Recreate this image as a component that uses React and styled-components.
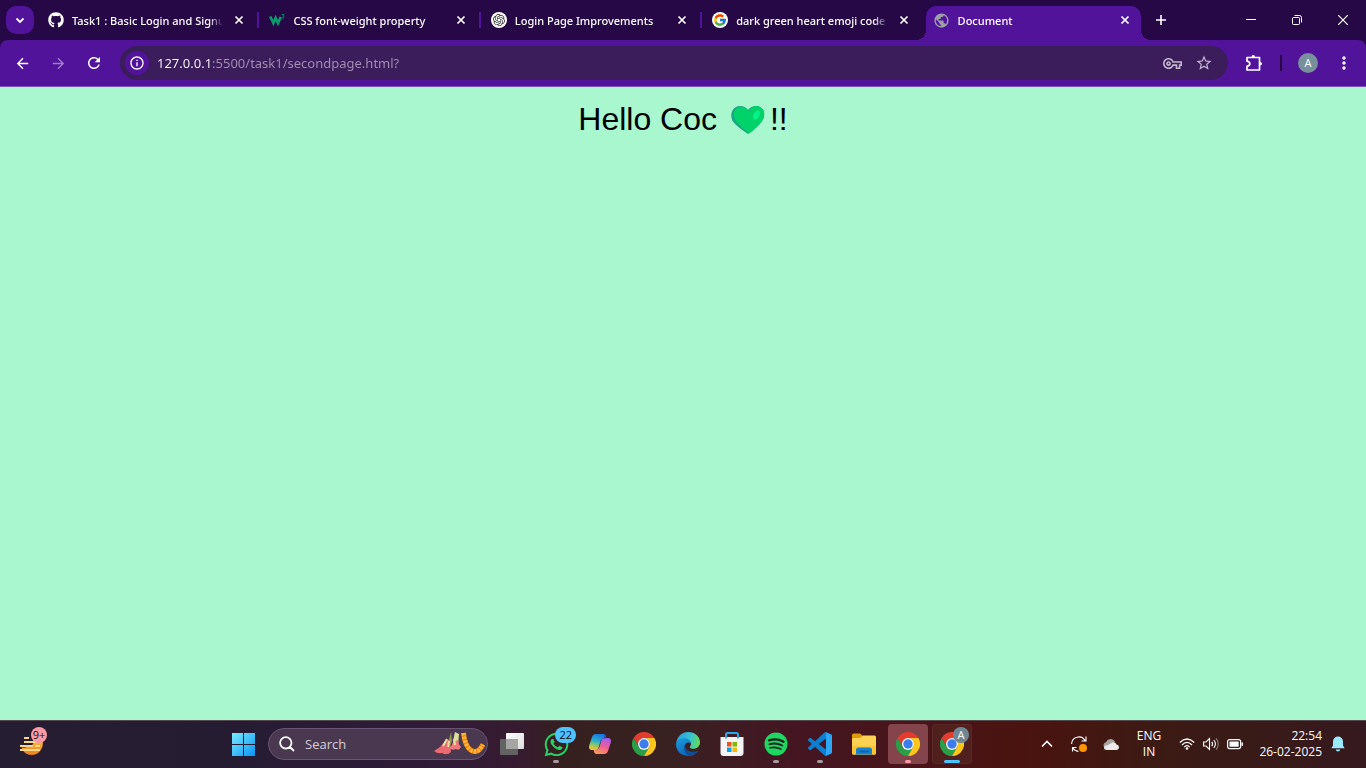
import React from "react";
import styled, { createGlobalStyle, css } from "styled-components";
import { FaGithub, FaWhatsapp } from "react-icons/fa";
import { FcGoogle } from "react-icons/fc";
import { SiOpenai } from "react-icons/si";
import {
  MdArrowBack,
  MdArrowForward,
  MdRefresh,
  MdInfoOutline,
  MdOutlineVpnKey,
  MdStarBorder,
  MdPublic,
  MdMoreVert,
  MdClose,
  MdAdd,
} from "react-icons/md";

const ui = `"Segoe UI", "Open Sans", "Noto Sans", sans-serif`;
const uiSmall = `"Segoe UI", "Noto Sans", "Open Sans", sans-serif`;

const Global = createGlobalStyle`
  *, *::before, *::after { box-sizing: border-box; }
  body { margin: 0; background: #a9f7cf; font-family: ${ui}; }
  button, input { font: inherit; color: inherit; border: 0; background: none; padding: 0; margin: 0; }
  button { display: flex; align-items: center; justify-content: center; cursor: pointer; }
  svg { display: block; flex: none; }
`;

const Screen = styled.div`
  display: flex;
  flex-direction: column;
  min-height: 100vh;
`;

/* ---------- browser ---------- */

const TabStrip = styled.header`
  display: flex;
  align-items: center;
  height: 40px;
  background: #260847;
  color: #fff;
`;

const TabSearch = styled.button`
  width: 28px;
  height: 28px;
  margin: 0 6px;
  border-radius: 10px;
  background: #52139b;
`;

const Tabs = styled.nav`
  display: grid;
  grid-auto-flow: column;
  grid-auto-columns: minmax(0, 1fr);
  align-self: flex-end;
  flex: 1;
  min-width: 0;
`;

const TabBox = styled.div`
  position: relative;
  display: flex;
  align-items: center;
  min-width: 0;
  height: 34px;
  padding: 0 2px 6px 8px;
  gap: 8px;
  ${(p) =>
    p.$active &&
    css`
      margin-right: 6px;
      padding-right: 8px;
      border-radius: 10px 10px 0 0;
      background: #52139b;
      &::before,
      &::after {
        content: "";
        position: absolute;
        bottom: 0;
        width: 10px;
        height: 10px;
      }
      &::before {
        right: 100%;
        background: radial-gradient(circle at 0 0, transparent 10px, #52139b 10px);
      }
      &::after {
        left: 100%;
        background: radial-gradient(circle at 100% 0, transparent 10px, #52139b 10px);
      }
    `}
`;

const TabLabel = styled.span`
  flex: 1;
  min-width: 0;
  padding-top: 1px;
  overflow: hidden;
  white-space: nowrap;
  font-family: ${uiSmall};
  font-size: 11px;
  font-weight: 500;
  line-height: 18px;
  mask-image: linear-gradient(to right, #000 calc(100% - 14px), transparent);
`;

const CloseTab = styled.button`
  width: 16px;
  height: 16px;
`;

const TabRule = styled.span`
  width: 2px;
  height: 16px;
  margin: 0 0 0 2px;
  background: ${(p) => (p.$hidden ? "transparent" : "#52139b")};
`;

const Favicon = styled.span`
  display: flex;
  align-items: center;
  justify-content: center;
  width: 16px;
  height: 16px;
  flex: none;
  border-radius: 50%;
  color: ${(p) => p.$color || "#fff"};
  background: ${(p) => p.$bg || "transparent"};
`;

const NewTab = styled.button`
  width: 28px;
  height: 28px;
  margin-right: 53px;
`;

const WindowButton = styled.button`
  width: 46px;
  height: 40px;
`;

const ToolbarBack = styled.div`
  background: #260847;
`;

const Toolbar = styled.div`
  display: flex;
  align-items: center;
  height: 47px;
  padding: 0 8px;
  border-radius: 8px 8px 0 0;
  border-bottom: 1px solid #7b4fb3;
  background: #52139b;
  color: #fff;
`;

const ToolButton = styled.button`
  width: 28px;
  height: 34px;
  margin-right: ${(p) => p.$gap || "8px"};
  opacity: ${(p) => (p.$dim ? 0.45 : 1)};
`;

const Omnibox = styled.div`
  display: flex;
  align-items: center;
  flex: 1;
  min-width: 0;
  height: 34px;
  margin: 0 12px 0 4px;
  padding: 0 12px 0 5px;
  border-radius: 17px;
  background: #3b1d5c;
  color: #c3b8ca;
`;

const SiteInfo = styled.button`
  width: 24px;
  height: 24px;
  border-radius: 50%;
  background: #52139b;
  color: #fff;
`;

const Address = styled.input`
  flex: 1;
  min-width: 0;
  height: 24px;
  margin-left: 8px;
  font-family: ${uiSmall};
  font-size: 13px;
  outline: none;
  background: linear-gradient(to right, #fff 54px, #a491b2 54px);
  background-clip: text;
  -webkit-background-clip: text;
  -webkit-text-fill-color: transparent;
`;

const OmniButton = styled.button`
  width: 24px;
  height: 24px;
  margin-left: 8px;
`;

const ToolRule = styled.span`
  width: 2px;
  height: 16px;
  margin-right: 12px;
  background: #260847;
`;

const Avatar = styled.span`
  display: flex;
  align-items: center;
  justify-content: center;
  width: 20px;
  height: 20px;
  border-radius: 50%;
  background: #78909c;
  font-size: 11px;
  line-height: 20px;
  color: #fff;
`;

/* ---------- page ---------- */

const Page = styled.main`
  flex: 1;
  padding: 14px 8px;
  background: #a9f7cf;
`;

const Greeting = styled.p`
  display: flex;
  justify-content: center;
  margin: 0;
  font-family: Arial, "Liberation Sans", sans-serif;
  font-size: 32px;
  line-height: 37px;
  color: #000;
  white-space: pre;
`;

/* ---------- taskbar ---------- */

const Taskbar = styled.footer`
  display: flex;
  align-items: center;
  height: 48px;
  box-shadow: inset 0 1px 0 #57474f;
  background: linear-gradient(
    to right,
    #251d31 0%,
    #251c33 18%,
    #301b38 32%,
    #371b30 38%,
    #35201f 41%,
    #3a2022 50%,
    #441622 58%,
    #481519 67%,
    #4a130f 75%,
    #3d1a14 84%,
    #381a18 92%,
    #36191f 100%
  );
  color: #fff;
`;

const WidgetArea = styled.div`
  display: flex;
  width: 221px;
  padding-left: 12px;
`;

const WidgetButton = styled.button`
  position: relative;
  width: 40px;
  height: 40px;
`;

const AppButton = styled.button`
  position: relative;
  width: 40px;
  height: 40px;
  margin: 0 2px;
  border-radius: 4px;
  background: ${(p) => p.$bg || "transparent"};
  box-shadow: ${(p) => (p.$outline ? "inset 0 0 0 1px #5a2826" : "none")};
  &::after {
    content: "";
    position: absolute;
    bottom: 1px;
    left: 50%;
    transform: translateX(-50%);
    width: ${(p) => (p.$wide ? "16px" : "6px")};
    height: 3px;
    border-radius: 2px;
    background: ${(p) => p.$mark || "transparent"};
  }
`;

const Badge = styled.span`
  position: absolute;
  top: 3px;
  right: ${(p) => p.$right || "0"};
  min-width: 16px;
  height: 16px;
  padding: 0 ${(p) => p.$pad || "0"};
  border-radius: 8px;
  background: ${(p) => p.$bg};
  color: ${(p) => p.$color || "#111"};
  font-size: 11px;
  line-height: 16px;
  text-align: center;
`;

const SearchBox = styled.label`
  display: flex;
  align-items: center;
  width: 220px;
  height: 32px;
  margin: 0 2px 0 3px;
  padding: 0 1px 0 10px;
  border: 1px solid #665472;
  border-radius: 16px;
  background: #49384f;
`;

const SearchInput = styled.input`
  flex: 1;
  min-width: 0;
  margin-left: 10px;
  font-size: 13px;
  outline: none;
  &::placeholder {
    color: #d6cfd9;
    opacity: 1;
  }
`;

const Tray = styled.div`
  display: flex;
  align-items: center;
  margin-left: auto;
  padding-right: 12px;
  font-size: 12px;
  line-height: 16px;
`;

const TrayButton = styled.button`
  width: ${(p) => p.$w || "32px"};
  height: 40px;
`;

const Language = styled.button`
  flex-direction: column;
  width: 44px;
  height: 40px;
`;

const Clock = styled.button`
  flex-direction: column;
  align-items: flex-end;
  width: 71px;
  height: 40px;
`;

/* ---------- drawings ---------- */

const Chrome = ({ size = 24 }) => (
  <svg width={size} height={size} viewBox="0 0 24 24">
    <path d="M1.6 6A12 12 0 0 1 22.4 6H12A6 6 0 0 0 6.8 15Z" fill="#e33b2e" />
    <path d="M1.6 6A12 12 0 0 0 12 24L17.2 15A6 6 0 0 1 6.8 15Z" fill="#2a9f48" />
    <path d="M22.4 6A12 12 0 0 1 12 24L17.2 15A6 6 0 0 0 12 6Z" fill="#fcc61b" />
    <circle cx="12" cy="12" r="6" fill="#fff" />
    <circle cx="12" cy="12" r="4.7" fill="#3b7ded" />
  </svg>
);

const Edge = () => (
  <svg width="24" height="24" viewBox="0 0 24 24">
    <defs>
      <linearGradient id="edgeTop" x1="0" y1="0.3" x2="1" y2="0.5">
        <stop offset="0" stopColor="#2a9fe0" />
        <stop offset="0.55" stopColor="#35c1d4" />
        <stop offset="1" stopColor="#63d957" />
      </linearGradient>
      <linearGradient id="edgeLow" x1="0" y1="0" x2="0.6" y2="1">
        <stop offset="0" stopColor="#1b9de0" />
        <stop offset="1" stopColor="#0b60b4" />
      </linearGradient>
    </defs>
    <path d="M0.3 11C1 4.5 6 0 12.2 0C19 0 24 4.6 24 10.2C24 14.2 21 16.7 17.5 16.7C15 16.7 13.7 15.8 13.8 14.9C14 14.2 15 13.8 15 12C15 9.5 12.5 7 8.6 7C4.600 7 1.300 9 .3 11Z" fill="url(#edgeTop)" />
    <path d="M0 12C.2 8.500 4 6.300 8.200 6.300C12.500 6.300 15 9 15 11.500C13.500 9.900 10 10.300 9 13C7.700 17 11 20.700 15.500 20.700C18.500 20.700 21 19.300 22 18.500C20.200 22 16.500 24 12.300 24C5 24 0 19 0 12Z" fill="url(#edgeLow)" />
    <path d="M9.200 12.500C6.500 16 8.500 22 14 23.800C17.500 23.500 20.700 21.500 22.300 18.200C17 21.500 8.800 19.500 9.200 12.500Z" fill="#124c94" />
  </svg>
);

const Copilot = () => (
  <svg width="24" height="24" viewBox="0 0 24 24">
    <defs>
      <linearGradient id="copA" x1="0.6" y1="0" x2="0.3" y2="1">
        <stop offset="0" stopColor="#1876e5" />
        <stop offset="0.45" stopColor="#27b0cf" />
        <stop offset="0.75" stopColor="#9bc75a" />
        <stop offset="1" stopColor="#f5c433" />
      </linearGradient>
      <linearGradient id="copB" x1="0.7" y1="0" x2="0.3" y2="1">
        <stop offset="0" stopColor="#a85af0" />
        <stop offset="0.5" stopColor="#ee5d96" />
        <stop offset="1" stopColor="#ff9b54" />
      </linearGradient>
    </defs>
    <path d="M8 2H15.500C17 2 17.700 3.200 18 4.500L18.500 6.500H16C14 6.500 13.200 7.500 12.700 9L10.500 16C10 17.500 9 18 7.500 18H4C1.500 18 .5 16 1.200 13.500L4 5C4.700 3 6 2 8 2Z" fill="url(#copA)" />
    <path d="M16 22H8.500C7 22 6.300 20.800 6 19.500L5.500 17.700H8C10 17.700 10.800 16.500 11.300 15L13.500 8C14 6.500 15 6 16.500 6H20C22.500 6 23.500 8 22.800 10.500L20 19C19.300 21 18 22 16 22Z" fill="url(#copB)" />
    <path d="M11.300 15L13.500 8C13.900 6.800 14.700 6.200 15.700 6L16.500 2.300C18 3 18.200 5 18.500 6.500H16C14 6.500 13.200 7.500 12.700 9L10.500 16Z" fill="#2450b8" />
  </svg>
);

const Store = () => (
  <svg width="24" height="24" viewBox="0 0 24 24">
    <path d="M6 6V2.500Q6 1 7.500 1H16.500Q18 1 18 2.500V6" fill="none" stroke="#29a8ea" strokeWidth="2" />
    <path d="M.5 5H23.500V21Q23.500 24 20.500 24H3.500Q.5 24 .5 21Z" fill="#f4f4f4" />
    <path d="M6 5V6.500M18 5V6.500" stroke="#1b7fc0" strokeWidth="1.500" />
    <path d="M7 10H11.500V14.500H7Z" fill="#f1511b" />
    <path d="M12.500 10H17V14.500H12.500Z" fill="#7fba00" />
    <path d="M7 15.500H11.500V20H7Z" fill="#00a4ef" />
    <path d="M12.500 15.500H17V20H12.500Z" fill="#fbb80a" />
  </svg>
);

const Spotify = () => (
  <svg width="24" height="24" viewBox="0 0 24 24">
    <circle cx="12" cy="12" r="11.500" fill="#1ed760" />
    <g fill="none" stroke="#1c2320" strokeLinecap="round">
      <path d="M5 8.300C10 6.900 15.500 7.400 19.500 9.700" strokeWidth="2.300" />
      <path d="M5.500 12.200C10 11 14.500 11.500 18.200 13.500" strokeWidth="1.900" />
      <path d="M6 15.800C10 14.900 13.700 15.300 17 17.100" strokeWidth="1.600" />
    </g>
  </svg>
);

const Code = () => (
  <svg width="24" height="24" viewBox="0 0 24 24">
    <path d="M23.150 2.587L18.210.210a1.494 1.494 0 0 0-1.705.290l-9.460 8.630-4.120-3.128a.999.999 0 0 0-1.276.057L.327 7.261A1 1 0 0 0 .326 8.740L3.899 12 .326 15.260a1 1 0 0 0 .001 1.479L1.650 17.940a.999.999 0 0 0 1.276.057l4.120-3.128 9.460 8.630a1.492 1.492 0 0 0 1.704.290l4.942-2.377A1.500 1.500 0 0 0 24 20.060V3.939a1.500 1.500 0 0 0-.850-1.352zm-5.146 14.861L10.826 12l7.178-5.448v10.896z" fill="#0c7fd0" />
    <path d="M18 .15L23.150 2.590A1.500 1.500 0 0 1 24 3.940V20.060A1.500 1.500 0 0 1 23.150 21.400L18 23.850Z" fill="#2da6f5" />
  </svg>
);

const Folder = () => (
  <svg width="24" height="24" viewBox="0 0 24 24">
    <path d="M0 3Q0 1.500 1.500 1.500H8L11 4H22V9H0Z" fill="#e09b0b" />
    <path d="M0 7Q0 6 1 6H8L11 3.500H22.500Q24 3.500 24 5V21Q24 22.500 22.500 22.500H1.500Q0 22.500 0 21Z" fill="#fdd253" />
    <path d="M0 14H24V21Q24 22.500 22.500 22.500H1.500Q0 22.500 0 21Z" fill="#fbc634" />
    <path d="M4 22.500V18Q4 15.500 6.500 15.500H17.500Q20 15.500 20 18V22.500Z" fill="#1580d0" />
    <path d="M8 19.500H16" stroke="#0b5ea5" strokeWidth="1.600" strokeLinecap="round" />
  </svg>
);

const TaskView = () => (
  <svg width="24" height="24" viewBox="0 0 24 24">
    <defs>
      <linearGradient id="tv" x1="0" y1="0" x2="1" y2="1">
        <stop offset="0" stopColor="#fff" />
        <stop offset="1" stopColor="#dcdcdc" />
      </linearGradient>
    </defs>
    <rect x="0" y="7" width="18" height="16" rx="1" fill="#626262" />
    <rect x="6" y="1" width="18" height="16" rx="1" fill="url(#tv)" />
    <rect x="6" y="7" width="12" height="10" fill="#a5a5a5" />
  </svg>
);

const Windows = () => (
  <svg width="24" height="24" viewBox="0 0 24 24">
    <defs>
      <linearGradient id="win" gradientUnits="userSpaceOnUse" x1="0" y1="0" x2="24" y2="24">
        <stop offset="0" stopColor="#7df0ff" />
        <stop offset="1" stopColor="#0a93f5" />
      </linearGradient>
    </defs>
    <path d="M1 1H12V12H1ZM13 1H24V12H13ZM1 13H12V24H1ZM13 13H24V24H13Z" fill="url(#win)" />
  </svg>
);

const Weather = () => (
  <svg width="24" height="24" viewBox="0 0 24 24">
    <defs>
      <linearGradient id="sun" x1="0" y1="0" x2="0" y2="1">
        <stop offset="0" stopColor="#f9bb3c" />
        <stop offset="1" stopColor="#ea7d1c" />
      </linearGradient>
    </defs>
    <path d="M15 8H22.500Q23.800 14 20.500 18.500Q17 23 12 23Q5.500 23 2.500 18L1.500 15.500H5L12 13.500Z" fill="url(#sun)" />
    <path d="M4 6H9M4 10H17M0 14H13M15 14H20M0 18H20" stroke="#f6d789" strokeWidth="2" />
  </svg>
);

const Flowers = () => (
  <svg width="52" height="26" viewBox="0 0 52 26">
    <path d="M17 1Q16 7 13 12L10 17L15 18L18 10Z" fill="#8f9a4c" />
    <path d="M21 1Q19 8 19 14L24 15L25 3Z" fill="#dbe09a" />
    <path d="M12 8Q9 15 0 20Q3 23 8 22Q13 25 17 21L16 10Z" fill="#ea6a70" />
    <path d="M19 11Q18 15 15 17Q18 20 22 18Q25 20 27 16Q24 13 24 9Z" fill="#f0777c" />
    <path d="M13 8L9 15M20 8L21 14M15 10L14 16" stroke="#e6e0a4" strokeWidth="2" />
    <path d="M29.500 2C30 9 33 19 40 20.500C45 21 47 17 49 13.500" fill="none" stroke="#e8820c" strokeWidth="5" />
    <path d="M29.500 2C30 9 33 19 40 20.500C45 21 47 17 49 13.500" fill="none" stroke="#ffb53c" strokeWidth="4" strokeDasharray="2.500 1.200" />
  </svg>
);

const W3 = () => (
  <svg width="16" height="16" viewBox="0 0 16 16">
    <path d="M1.200 4.500L4.400 11L6.600 6L9 11L11.800 5" fill="none" stroke="#0a9b6b" strokeWidth="2.700" />
    <path d="M12.700 2.500H15L13.800 4.100Q15.300 4.300 15 5.500Q14.500 6.700 12.800 6" fill="none" stroke="#0a8a62" strokeWidth="1" />
  </svg>
);

const Puzzle = () => (
  <svg width="18" height="18" viewBox="0 0 18 18" fill="none" stroke="currentColor" strokeWidth="1.700" strokeLinejoin="round">
    <path d="M2 3.500H14.500V16H2V12.300Q4.800 11.800 4.800 9.750Q4.800 7.700 2 7.200Z" />
    <path d="M6.500 3Q6.500 1 8.250 1Q10 1 10 3ZM15 8Q17 8 17 9.750Q17 11.500 15 11.500Z" fill="currentColor" stroke="none" />
  </svg>
);

const Heart = () => (
  <svg width="44" height="37" viewBox="-1 0 44 37" role="img" aria-label="green heart">
    <path d="M21 33Q9 25 5.500 20Q3 14 5.500 9.500Q8 5 13 5Q18 5 21 9Q24 5 29 5Q34 5 36.500 9.500Q38.500 14.500 35 20Q31 26 21 33Z" fill="#1aa584" />
    <path d="M22 32.500Q12 25 8.500 19.500Q5.500 14 7.500 10Q9.500 6 14 6Q19 6 22 10Q24.500 5 29 5Q34 5 36.500 9.500Q38.500 14.500 35 20Q31 26 22 32.500Z" fill="#00d26a" />
    <ellipse cx="29.500" cy="14" rx="3" ry="5" transform="rotate(28 29.500 14)" fill="#00f387" />
  </svg>
);

const Line = ({ w = 16, h = w, d, sw = 1, ...rest }) => (
  <svg width={w} height={h} viewBox={`0 0 ${w} ${h}`} fill="none" stroke="currentColor" strokeWidth={sw} {...rest}>
    <path d={d} />
  </svg>
);

const tabs = [
  { title: "Task1 : Basic Login and Signup", icon: <FaGithub size={16} /> },
  { title: "CSS font-weight property", icon: <W3 /> },
  { title: "Login Page Improvements", icon: <SiOpenai size={12} />, bg: "#fff", color: "#333" },
  { title: "dark green heart emoji code -", icon: <FcGoogle size={14} />, bg: "#fff" },
  { title: "Document", icon: <MdPublic size={17} />, color: "#9a9fa8", active: true },
];

const Tab = ({ title, icon, bg, color, active, last }) => (
  <TabBox $active={active}>
    <Favicon $bg={bg} $color={color}>{icon}</Favicon>
    <TabLabel>{title}</TabLabel>
    <CloseTab aria-label={`Close ${title}`}>
      <Line w={10} d="M1.500 1.500L8.500 8.500M8.500 1.500L1.500 8.500" sw={1.7} />
    </CloseTab>
    {!active && <TabRule $hidden={last} />}
  </TabBox>
);

const grey = "#a79a9e";

export default function App() {
  return (
    <Screen>
      <Global />
      <TabStrip>
        <TabSearch aria-label="Search tabs">
          <Line w={10} d="M1.500 3.500L5 7L8.500 3.500" sw={1.8} />
        </TabSearch>
        <Tabs aria-label="Tabs">
          {tabs.map((t, i) => (
            <Tab key={t.title} {...t} last={i === 3} />
          ))}
        </Tabs>
        <NewTab aria-label="New tab"><Line w={12} d="M6 1V11M1 6H11" sw={1.6} /></NewTab>
        <WindowButton aria-label="Minimize"><Line w={10} d="M0 4.500H10" /></WindowButton>
        <WindowButton aria-label="Restore">
          <Line w={10} d="M.5 3.500Q.5 2.500 1.500 2.500H6.500Q7.500 2.500 7.500 3.500V8.500Q7.500 9.500 6.500 9.500H1.500Q.5 9.500 .5 8.500ZM2.500 .5H7.500Q9.500 .5 9.500 2.500V7.500" />
        </WindowButton>
        <WindowButton aria-label="Close"><Line w={10} d="M0 0L10 10M10 0L0 10" sw={1.2} /></WindowButton>
      </TabStrip>
      <ToolbarBack>
        <Toolbar>
          <ToolButton aria-label="Back"><MdArrowBack size={17} /></ToolButton>
          <ToolButton aria-label="Forward" $dim><MdArrowForward size={17} /></ToolButton>
          <ToolButton aria-label="Reload"><MdRefresh size={18} /></ToolButton>
          <Omnibox>
            <SiteInfo aria-label="Site information"><MdInfoOutline size={16} /></SiteInfo>
            <Address aria-label="Address" defaultValue="127.0.0.1:5500/task1/secondpage.html?" spellCheck={false} />
            <OmniButton aria-label="Passwords"><MdOutlineVpnKey size={19} /></OmniButton>
            <OmniButton aria-label="Bookmark"><MdStarBorder size={18} /></OmniButton>
          </Omnibox>
          <ToolButton aria-label="Extensions" $gap="12px"><Puzzle /></ToolButton>
          <ToolRule />
          <ToolButton aria-label="Profile"><Avatar>A</Avatar></ToolButton>
          <ToolButton aria-label="Menu" $gap="0"><MdMoreVert size={20} /></ToolButton>
        </Toolbar>
      </ToolbarBack>
      <Page>
        <Greeting>Hello Coc <Heart />!!</Greeting>
      </Page>
      <Taskbar>
        <WidgetArea>
          <WidgetButton aria-label="Widgets">
            <Weather />
            <Badge $bg="#ff99a4" $right="5px">9+</Badge>
          </WidgetButton>
        </WidgetArea>
        <AppButton aria-label="Start"><Windows /></AppButton>
        <SearchBox>
          <Line w={16} d="M11 11L15 15M12.500 6.800A5.700 5.700 0 1 1 1.100 6.800A5.700 5.700 0 1 1 12.500 6.800Z" sw={1.8} />
          <SearchInput placeholder="Search" aria-label="Search" />
          <Flowers />
        </SearchBox>
        <AppButton aria-label="Task view"><TaskView /></AppButton>
        <AppButton aria-label="WhatsApp" $mark={grey}>
          <FaWhatsapp size={27} color="#25d366" />
          <Badge $bg="#4cc2ff" $pad="4px">22</Badge>
        </AppButton>
        <AppButton aria-label="Copilot"><Copilot /></AppButton>
        <AppButton aria-label="Chrome"><Chrome /></AppButton>
        <AppButton aria-label="Edge"><Edge /></AppButton>
        <AppButton aria-label="Store"><Store /></AppButton>
        <AppButton aria-label="Spotify" $mark={grey}><Spotify /></AppButton>
        <AppButton aria-label="Code editor" $mark={grey}><Code /></AppButton>
        <AppButton aria-label="File explorer"><Folder /></AppButton>
        <AppButton aria-label="Chrome, first profile" $bg="#84444b" $mark="#ff99a4"><Chrome /></AppButton>
        <AppButton aria-label="Chrome, second profile" $bg="#50201f" $outline $wide $mark="#4cc2ff">
          <Chrome />
          <Badge $bg="#6f8794" $color="#fff" $right="3px">A</Badge>
        </AppButton>
        <Tray>
          <TrayButton aria-label="Show hidden icons"><Line w={12} d="M1 8.500L6 3.500L11 8.500" sw={1.6} /></TrayButton>
          <TrayButton aria-label="Update">
            <svg width="16" height="16" viewBox="0 0 16 16" fill="none" stroke="#fff" strokeWidth="1.100">
              <path d="M.6 8A7.200 7.200 0 0 1 14 4.500M15 .5V5H10.500M1.500 15.500V11.500H5.500M1.800 11.800Q3.500 15 7.500 15.400" />
              <circle cx="12" cy="12" r="4" fill="#ff9500" stroke="none" />
            </svg>
          </TrayButton>
          <TrayButton aria-label="OneDrive">
            <svg width="16" height="12" viewBox="0 0 16 12">
              <path d="M3.500 11A3.500 3.500 0 0 1 3 4.200A5 5 0 0 1 12 3.500Z" fill="#a8a4a4" />
              <path d="M4 12Q1 12 1 9.500Q1.500 7 4.500 7.200L9.500 4.500Q12 3.500 13.500 6.500Q16 6.800 16 9.300Q15.800 12 13 12Z" fill="#eceaea" />
            </svg>
          </TrayButton>
          <Language aria-label="Language ENG IN"><span>ENG</span><span>IN</span></Language>
          <TrayButton aria-label="Wi-Fi">
            <svg width="16" height="12" viewBox="0 0 16 12" fill="none" stroke="#fff" strokeWidth="1.200">
              <path d="M.8 4.500Q8 -2.500 15.200 4.500M3 7Q8 1.900 13 7M5.300 9.200Q8 6.200 10.700 9.200" />
              <circle cx="8" cy="10.500" r="1.300" fill="#fff" stroke="none" />
            </svg>
          </TrayButton>
          <TrayButton aria-label="Volume" $w="16px">
            <svg width="16" height="14" viewBox="0 0 16 14" fill="none" stroke="#fff" strokeWidth="1.100">
              <path d="M.6 5H3L6.500 1.500V12.500L3 9H.6ZM8.700 4.800Q10.500 7 8.700 9.200M10.800 3Q14 7 10.800 11" />
              <path d="M13 1.200Q17.500 7 13 12.800" stroke="#8a7774" />
            </svg>
          </TrayButton>
          <TrayButton aria-label="Battery">
            <svg width="16" height="12" viewBox="0 0 16 12">
              <rect x=".6" y="1.600" width="13" height="9" rx="2" fill="none" stroke="#fff" strokeWidth="1.200" />
              <rect x="2.500" y="3.500" width="9.200" height="5.200" rx=".5" fill="#fff" />
              <path d="M14.500 4.500H16V7.700H14.500Z" fill="#fff" />
            </svg>
          </TrayButton>
          <Clock aria-label="Clock 22:54 26-02-2025"><span>22:54</span><span>26-02-2025</span></Clock>
          <TrayButton aria-label="Notifications">
            <svg width="14" height="16" viewBox="0 0 14 16">
              <path d="M7 .5A5 5 0 0 1 12 5.500V9.500L13.600 12.300H.4L2 9.500V5.500A5 5 0 0 1 7 .5ZM4.700 13.500H9.300Q8.800 15.500 7 15.500Q5.200 15.500 4.700 13.500Z" fill="#99ebff" />
            </svg>
          </TrayButton>
        </Tray>
      </Taskbar>
    </Screen>
  );
}
